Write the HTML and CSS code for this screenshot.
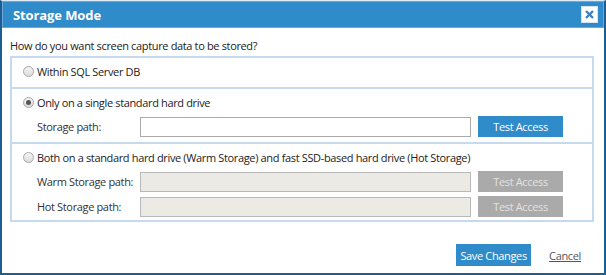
FILE: index.html
```html
<!DOCTYPE html>
<html lang="en">
  <head>
    <meta charset="UTF-8" />
    <title>Storage Mode</title>
    <link rel="stylesheet" href="styles.css">
  </head>
  <body>
    <div class="dialog">
      <div class="dialog-header">
        <h2>Storage Mode</h2>
        <button class="close-btn" title="Close">
          <svg width="9" height="9" viewBox="0 0 9 9">
            <path d="M1 1 L8 8 M8 1 L1 8" stroke="#3f7fbf" stroke-width="2.4" />
          </svg>
        </button>
      </div>

      <div class="dialog-body">
        <p class="question">How do you want screen capture data to be stored?</p>

        <div class="options">
          <div class="option">
            <label class="radio-line">
              <span class="radio"></span>
              Within SQL Server DB
            </label>
          </div>

          <div class="option">
            <label class="radio-line">
              <span class="radio checked"></span>
              Only on a single standard hard drive
            </label>
            <div class="field-row">
              <span class="field-label">Storage path:</span>
              <input type="text" class="path-input" />
              <button class="btn">Test Access</button>
            </div>
          </div>

          <div class="option">
            <label class="radio-line">
              <span class="radio"></span>
              Both on a standard hard drive (Warm Storage) and fast SSD-based hard drive (Hot Storage)
            </label>
            <div class="field-row">
              <span class="field-label">Warm Storage path:</span>
              <input type="text" class="path-input" disabled />
              <button class="btn" disabled>Test Access</button>
            </div>
            <div class="field-row">
              <span class="field-label">Hot Storage path:</span>
              <input type="text" class="path-input" disabled />
              <button class="btn" disabled>Test Access</button>
            </div>
          </div>
        </div>
      </div>

      <div class="dialog-footer">
        <button class="btn btn-save">Save Changes</button>
        <a href="#" class="cancel">Cancel</a>
      </div>
    </div>
  </body>
</html>
```

FILE: styles.css
```css
* {
  margin: 0;
  padding: 0;
  box-sizing: border-box;
  font-family: "Open Sans", Arial, sans-serif;
  letter-spacing: -0.35px;
}
body {
  background-color: #ffffff;
}
.dialog {
  width: 606px;
  height: 275px;
  border: 2px solid #1c5d94;
  border-top: 1px solid #dfe9f3;
  display: flex;
  flex-direction: column;
  background-color: white;
}
.dialog-header {
  height: 27px;
  background-color: #2f8bca;
  border: 1px solid #6aa9d8;
  display: flex;
  align-items: center;
  justify-content: space-between;
  padding: 0 5px 0 10px;
}
.dialog-header h2 {
  color: white;
  font-size: 13px;
  font-weight: bold;
  letter-spacing: -0.1px;
}
.close-btn {
  width: 17px;
  height: 17px;
  background-color: white;
  border: 1px solid #d5e3f0;
  display: flex;
  align-items: center;
  justify-content: center;
  cursor: pointer;
}
.dialog-body {
  padding: 10px 8px 0 8px;
  flex: 1;
}
.question {
  color: #222;
  font-size: 11px;
  margin-bottom: 3px;
}
.options {
  border: 2px solid #c5daee;
  margin-right: 2px;
}
.option {
  padding: 5px 0 3px 11px;
  border-top: 2px solid #c5daee;
}
.option:first-child {
  border-top: none;
  padding-bottom: 8px;
}
.radio-line {
  display: flex;
  align-items: center;
  gap: 3px;
  font-size: 11px;
  color: #222;
  height: 16px;
}
.radio {
  width: 11px;
  height: 11px;
  border-radius: 50%;
  border: 1px solid #a8a8a8;
  background: linear-gradient(#f4f4f4, #dcdcdc);
  display: inline-flex;
  align-items: center;
  justify-content: center;
}
.radio.checked::after {
  content: "";
  width: 5px;
  height: 5px;
  border-radius: 50%;
  background-color: #555;
}
.field-row {
  display: flex;
  align-items: center;
  margin-top: 4px;
  padding-left: 14px;
}
.radio-line + .field-row {
  margin-top: 6px;
}
.option:nth-child(2) {
  padding-bottom: 5px;
}
.field-label {
  width: 103px;
  font-size: 11px;
  color: #333;
}
.path-input {
  width: 331px;
  height: 20px;
  border: 1px solid #aaaaaa;
  background-color: white;
}
.path-input:disabled {
  background-color: #ebeae4;
  border-color: #b8b8b8;
}
.btn {
  height: 21px;
  border: none;
  background-color: #2f8bca;
  color: white;
  font-size: 11px;
  cursor: pointer;
}
.field-row .btn {
  width: 85px;
  margin-left: 7px;
}
.btn:disabled {
  background-color: #aaaaaa;
  color: #e2e2e2;
  cursor: default;
}
.dialog-footer {
  display: flex;
  align-items: center;
  justify-content: flex-end;
  gap: 18px;
  padding: 0 23px 7px 0;
}
.btn-save {
  width: 75px;
  height: 22px;
}
.cancel {
  color: #555;
  font-size: 11px;
}
```
